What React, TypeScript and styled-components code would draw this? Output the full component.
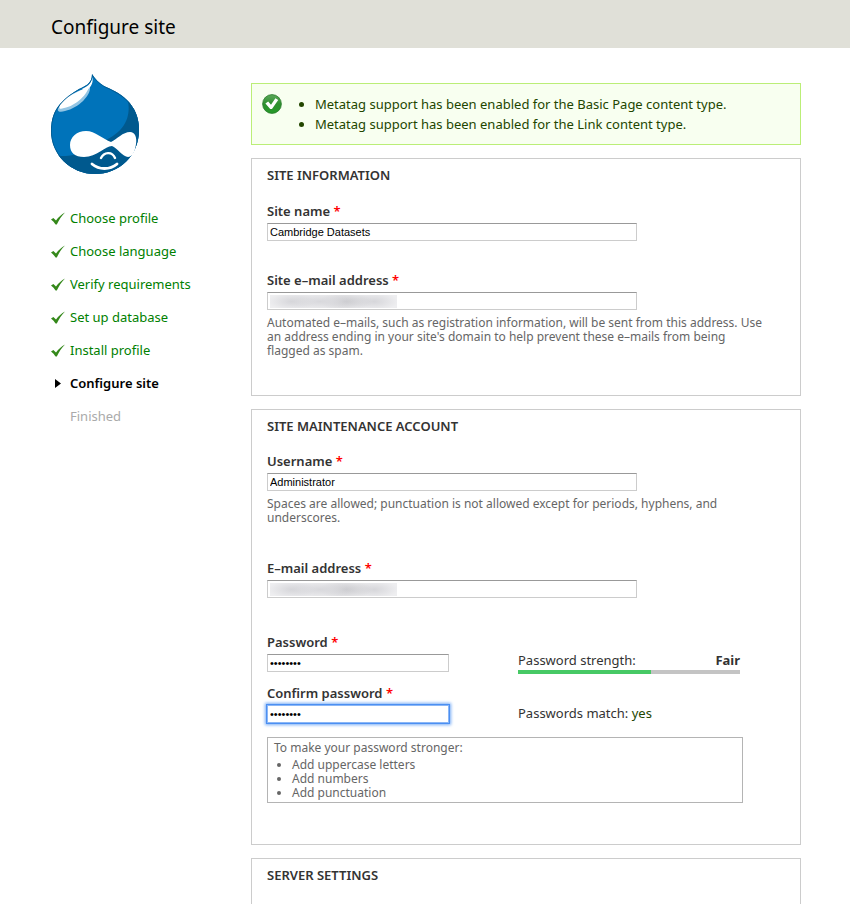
import React from "react";
import styled, { createGlobalStyle, css } from "styled-components";

const GlobalStyle = createGlobalStyle`
  * { box-sizing: border-box; }
  body {
    margin: 0;
    background: #fff;
    color: #333;
    font: 13px/20px "Noto Sans", "Lucida Grande", Verdana, sans-serif;
  }
`;

const Page = styled.div`
  min-height: 100vh;
  display: flex;
  flex-direction: column;
`;

const Branding = styled.header`
  background: #e0e0d8;
  padding: 14px 51px 8px;
`;

const PageTitle = styled.h1`
  margin: 0;
  color: #000;
  font-size: 19px;
  line-height: 26px;
  font-weight: 400;
`;

const Columns = styled.div`
  flex: 1;
  display: flex;
  padding: 0 49px 0 51px;
`;

const Sidebar = styled.aside`
  flex: none;
  width: 200px;
  padding-top: 26px;
`;

const Logo = styled.svg`
  display: block;
  width: 88px;
  height: 100px;
`;

const TaskList = styled.ol`
  list-style: none;
  margin: 34px 0 0;
  padding: 0;
  display: flex;
  flex-direction: column;
  gap: 13px;
`;

type TaskState = "done" | "active" | "pending";

const taskColors = { done: "#008000", active: "#000", pending: "#aaa" };

const Task = styled.li<{ $state: TaskState }>`
  display: flex;
  align-items: center;
  gap: 4px;
  color: ${(p) => taskColors[p.$state]};
  font-weight: ${(p) => (p.$state === "active" ? 600 : 400)};
`;

const TaskIcon = styled.svg`
  flex: none;
  width: 15px;
  height: 14px;
`;

const Content = styled.main`
  flex: 1;
  min-width: 0;
  padding-top: 35px;
  display: flex;
  flex-direction: column;
  gap: 13px;
`;

const StatusMessage = styled.div`
  display: flex;
  background: #f8fff0;
  border: 1px solid #be7;
  padding: 10px;
  color: #234600;
`;

const StatusIcon = styled.svg`
  flex: none;
  width: 20px;
  height: 20px;
`;

const MessageList = styled.ul`
  margin: 0;
  padding: 0 0 0 33px;
`;

const Form = styled.form`
  flex: 1;
  display: flex;
  flex-direction: column;
  gap: 13px;
`;

const Panel = styled.section<{ $open?: boolean }>`
  border: 1px solid #ccc;
  padding: 6px 15px 37px;
  ${(p) =>
    p.$open &&
    css`
      flex: 1;
      border-bottom: 0;
      padding-bottom: 0;
    `}
`;

const PanelTitle = styled.h2`
  margin: 0;
  font-size: 13px;
  line-height: 20px;
  font-weight: 600;
  text-transform: uppercase;
`;

const Field = styled.div<{ $gap: number }>`
  margin-top: ${(p) => p.$gap}px;
`;

const Label = styled.label`
  display: block;
  font-weight: 600;
  line-height: 20px;
  margin-bottom: 2px;
`;

const Required = styled.span`
  color: #f00;
`;

const inputBase = css`
  display: block;
  height: 18px;
  margin: 0;
  padding: 0 2px;
  border: 1px solid #ccc;
  border-top-color: #999;
  border-radius: 0;
  background: #fff;
  color: #000;
  font: 11px/14px "Liberation Sans", Arial, sans-serif;
`;

const TextInput = styled.input`
  ${inputBase}
  width: 370px;
  max-width: 100%;
`;

const MaskedInput = styled(TextInput)`
  background:
    radial-gradient(ellipse 24px 9px at 22px 50%, #d6d6da, transparent) 2px 2px / 127px 13px no-repeat,
    radial-gradient(ellipse 34px 9px at 50px 50%, #d8d8dc, transparent) 2px 2px / 127px 13px no-repeat,
    radial-gradient(ellipse 26px 10px at 76px 50%, #cacace, transparent) 2px 2px / 127px 13px no-repeat,
    radial-gradient(ellipse 24px 9px at 104px 50%, #d6d6da, transparent) 2px 2px / 127px 13px no-repeat,
    linear-gradient(#eeeef0, #eeeef0) 2px 2px / 127px 13px no-repeat,
    #fff;
`;

const PasswordInput = styled.input<{ $active?: boolean }>`
  ${inputBase}
  width: 182px;
  outline: 0;
  ${(p) =>
    p.$active &&
    css`
      border-color: #8ab6f6;
      box-shadow: 0 0 0 1px #4b8ff2, 0 0 3px 2px #79adf6;
    `}
`;

const Description = styled.p`
  max-width: 499px;
  margin: 6px 0 0;
  color: #666;
  font-size: 12px;
  line-height: 14px;
`;

const PasswordGrid = styled.div`
  display: grid;
  grid-template-columns: 182px 222px;
  column-gap: 69px;
  row-gap: 9px;
  margin-top: 34px;
`;

const Strength = styled.div`
  padding-top: 18px;
`;

const StrengthRow = styled.div`
  display: flex;
  justify-content: space-between;
`;

const StrengthTrack = styled.div`
  height: 4px;
  background: #c4c4c4;
`;

const StrengthBar = styled.div`
  height: 4px;
  background: #47c965;
`;

const Match = styled.div`
  padding-top: 20px;
`;

const Yes = styled.span`
  color: #234600;
`;

const Tips = styled.div`
  width: 476px;
  max-width: 100%;
  margin: 14px 0 4px;
  border: 1px solid #b4b4b4;
  padding: 3px 6px 2px;
  color: #666;
  font-size: 12px;
  line-height: 14px;
`;

const TipList = styled.ul`
  margin: 3px 0 0;
  padding-left: 18px;
`;

const dropOutline =
  "M41 0C44 5 48 9 53 12C60 15 69 19 76 26C84 34 88 44 88 56C88 82 68 100 44 100C20 100 0 81 0 57C0 45 3 37 9 30C14 24 21 19 28 15C34 12 41 10 41 0Z";

function Druplicon() {
  return (
    <Logo viewBox="0 0 88 100" role="img" aria-label="Drupal">
      <defs>
        <clipPath id="drop">
          <path d={dropOutline} />
        </clipPath>
      </defs>
      <g clipPath="url(#drop)">
        <rect width="88" height="100" fill="#0073ba" />
        <path d="M77 27C80 44 73 57 55 66L22 81C13 83 7 82 2 80L8 100H88V40Z" fill="#00598e" />
        <path d="M39 13C40 21 28 34 14 37C8 39 5 37 8 33L12 26C19 20 29 16 39 13Z" fill="#93c5e4" />
        <path d="M38 12C37 20 25 32 13 34C8 36 7 34 10 29C17 21 29 17 38 12Z" fill="#fff" />
        <path d="M41 3C43 8 40 13 36 16L31 15C38 12 41 8 41 3Z" fill="#fff" />
        <path d={dropOutline} fill="none" stroke="#00598e" strokeWidth="1.4" />
      </g>
      <path d="M35 57C44 57 52 65 60 68C66 65 72 58 79 58C84 58 86 63 85 70C84 78 81 83 77 83C72 83 66 74 61 72C54 72 46 83 33 83C24 83 19 79 19 71C19 63 26 57 35 57Z" fill="#fff" />
      <path d="M50 84C53 78 61 77 64 84" fill="none" stroke="#fff" strokeWidth="2.4" strokeLinecap="round" />
      <path d="M41 90C48 96 59 96 66 90" fill="none" stroke="#fff" strokeWidth="2.8" strokeLinecap="round" />
    </Logo>
  );
}

function TaskMark({ state }: { state: TaskState }) {
  return (
    <TaskIcon viewBox="0 0 15 14" aria-hidden="true">
      {state === "done" && <path d="M0 8.5L2.4 7L5 9.6C7.5 6 10.5 3.6 14 1.6C10.5 5 8 9 5.8 13.6H4.6C3.3 11.6 2 10 0 8.5Z" fill="#34881a" />}
      {state === "active" && <path d="M4 3L10 7.5L4 12Z" fill="#000" />}
    </TaskIcon>
  );
}

const tasks: { name: string; state: TaskState }[] = [
  { name: "Choose profile", state: "done" },
  { name: "Choose language", state: "done" },
  { name: "Verify requirements", state: "done" },
  { name: "Set up database", state: "done" },
  { name: "Install profile", state: "done" },
  { name: "Configure site", state: "active" },
  { name: "Finished", state: "pending" },
];

function FieldLabel({ id, text }: { id: string; text: string }) {
  return (
    <Label htmlFor={id}>
      {text} <Required>*</Required>
    </Label>
  );
}

export default function App() {
  const strength = 60;
  return (
    <Page>
      <GlobalStyle />
      <Branding>
        <PageTitle>Configure site</PageTitle>
      </Branding>
      <Columns>
        <Sidebar>
          <Druplicon />
          <TaskList>
            {tasks.map((t) => (
              <Task key={t.name} $state={t.state}>
                <TaskMark state={t.state} />
                {t.name}
              </Task>
            ))}
          </TaskList>
        </Sidebar>
        <Content>
          <StatusMessage role="status">
            <StatusIcon viewBox="0 0 20 20" aria-hidden="true">
              <defs>
                <linearGradient id="ball" x1="0" y1="0" x2="0" y2="1">
                  <stop offset="0" stopColor="#5aa85a" />
                  <stop offset="0.5" stopColor="#2f8f30" />
                  <stop offset="1" stopColor="#259a28" />
                </linearGradient>
              </defs>
              <circle cx="10" cy="10" r="9.4" fill="url(#ball)" stroke="#2a7a2c" strokeWidth="0.8" />
              <path d="M3.4 9.4L6.2 7.6L9 10.8L13.4 4.2L16.2 6L10 15H8.2Z" fill="#fff" />
            </StatusIcon>
            <MessageList>
              <li>Metatag support has been enabled for the Basic Page content type.</li>
              <li>Metatag support has been enabled for the Link content type.</li>
            </MessageList>
          </StatusMessage>
          <Form>
            <Panel>
              <PanelTitle>Site information</PanelTitle>
              <Field $gap={16}>
                <FieldLabel id="site-name" text="Site name" />
                <TextInput id="site-name" type="text" defaultValue="Cambridge Datasets" />
              </Field>
              <Field $gap={29}>
                <FieldLabel id="site-mail" text="Site e–mail address" />
                <MaskedInput id="site-mail" type="email" />
                <Description>
                  Automated e–mails, such as registration information, will be sent from this address. Use an address ending in your site's domain to help prevent these e–mails from being flagged as spam.
                </Description>
              </Field>
            </Panel>
            <Panel>
              <PanelTitle>Site maintenance account</PanelTitle>
              <Field $gap={15}>
                <FieldLabel id="username" text="Username" />
                <TextInput id="username" type="text" defaultValue="Administrator" />
                <Description>
                  Spaces are allowed; punctuation is not allowed except for periods, hyphens, and underscores.
                </Description>
              </Field>
              <Field $gap={33}>
                <FieldLabel id="mail" text="E–mail address" />
                <MaskedInput id="mail" type="email" />
              </Field>
              <PasswordGrid>
                <div>
                  <FieldLabel id="pass" text="Password" />
                  <PasswordInput id="pass" type="password" defaultValue="password" />
                </div>
                <Strength>
                  <StrengthRow>
                    <span>Password strength:</span>
                    <strong>Fair</strong>
                  </StrengthRow>
                  <StrengthTrack>
                    <StrengthBar style={{ width: `${strength}%` }} />
                  </StrengthTrack>
                </Strength>
                <div>
                  <FieldLabel id="confirm" text="Confirm password" />
                  <PasswordInput id="confirm" type="password" defaultValue="password" $active />
                </div>
                <Match>
                  Passwords match: <Yes>yes</Yes>
                </Match>
              </PasswordGrid>
              <Tips>
                To make your password stronger:
                <TipList>
                  <li>Add uppercase letters</li>
                  <li>Add numbers</li>
                  <li>Add punctuation</li>
                </TipList>
              </Tips>
            </Panel>
            <Panel $open>
              <PanelTitle>Server settings</PanelTitle>
            </Panel>
          </Form>
        </Content>
      </Columns>
    </Page>
  );
}
